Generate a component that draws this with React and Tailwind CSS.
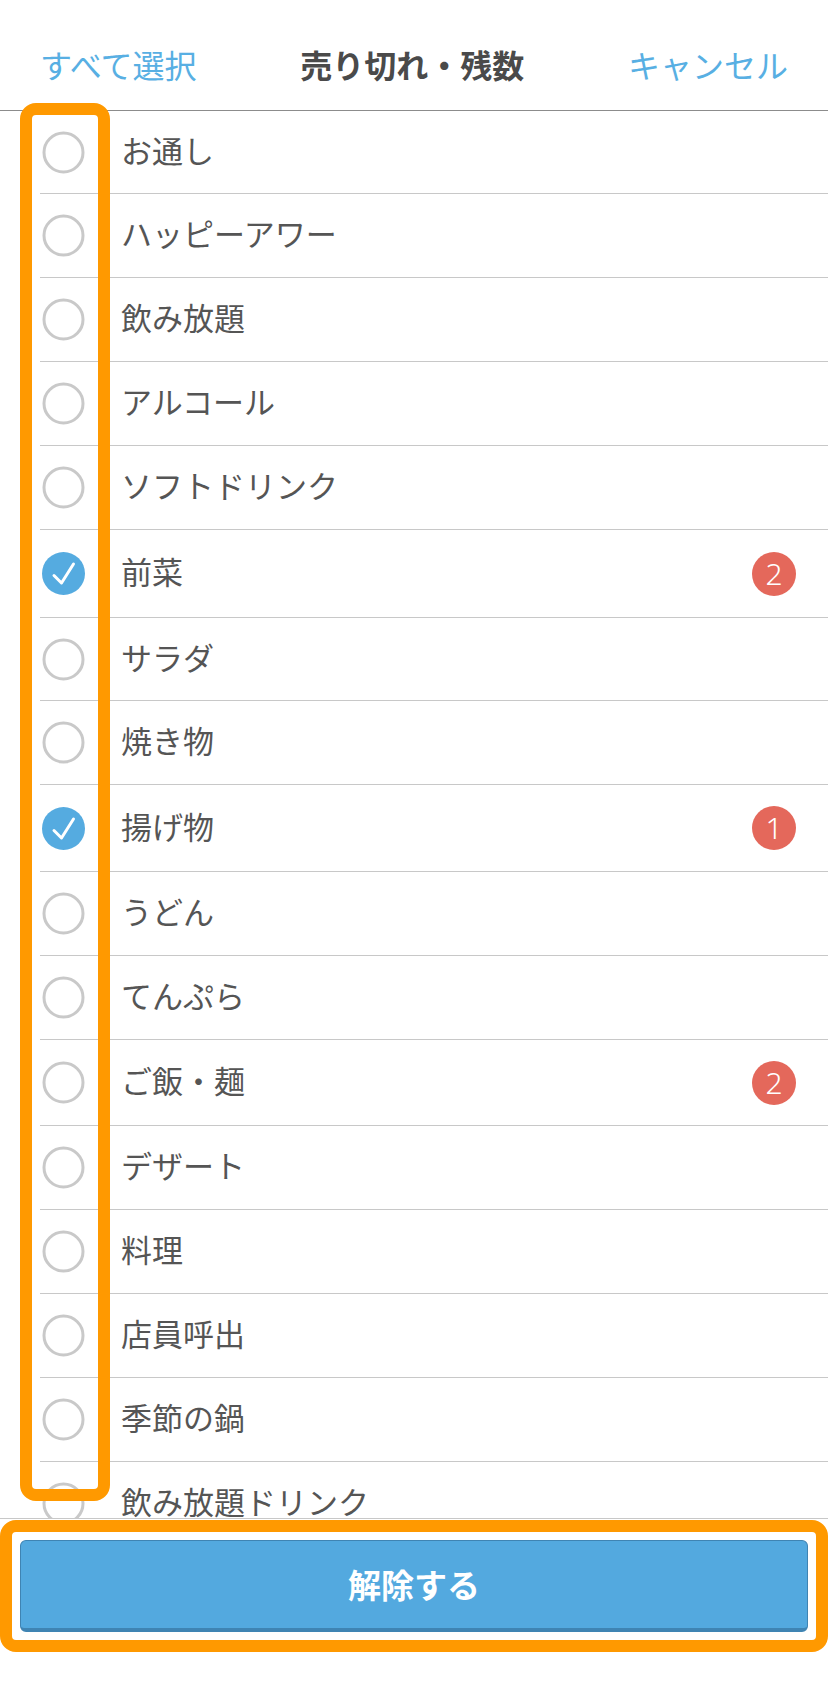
import React from 'react';

const items = [
  { name: 'お通し', h: 'h-[83px]' },
  { name: 'ハッピーアワー', h: 'h-[84px]' },
  { name: '飲み放題', h: 'h-[84px]' },
  { name: 'アルコール', h: 'h-[84px]' },
  { name: 'ソフトドリンク', h: 'h-[84px]' },
  { name: '前菜', h: 'h-[88px]', checked: true, count: 2 },
  { name: 'サラダ', h: 'h-[83px]' },
  { name: '焼き物', h: 'h-[84px]' },
  { name: '揚げ物', h: 'h-[87px]', checked: true, count: 1 },
  { name: 'うどん', h: 'h-[84px]' },
  { name: 'てんぷら', h: 'h-[84px]' },
  { name: 'ご飯・麺', h: 'h-[86px]', count: 2 },
  { name: 'デザート', h: 'h-[84px]' },
  { name: '料理', h: 'h-[84px]' },
  { name: '店員呼出', h: 'h-[84px]' },
  { name: '季節の鍋', h: 'h-[84px]' },
  { name: '飲み放題ドリンク', h: 'h-[84px]' },
];

const CheckCircle = ({ checked }) => {
  if (checked) {
    return (
      <svg width="43" height="43" viewBox="0 0 43 43" className="shrink-0">
        <circle cx="21.5" cy="21.5" r="21.5" fill="#55abe0" />
        <path
          d="M12 23.5 L19.5 31 L31.5 12"
          fill="none"
          stroke="#fff"
          strokeWidth="3"
          strokeLinecap="round"
          strokeLinejoin="round"
        />
      </svg>
    );
  }
  return (
    <svg width="43" height="43" viewBox="0 0 43 43" className="shrink-0">
      <circle cx="21.5" cy="21.5" r="19.5" fill="none" stroke="#c9c9c9" strokeWidth="3" />
    </svg>
  );
};

const Row = ({ item }) => (
  <div className={`${item.h} ml-[40px] flex items-center border-b border-[#c8c8c8] shrink-0`}>
    <div className="ml-[2px]">
      <CheckCircle checked={item.checked} />
    </div>
    <span className="ml-[36px] mb-[6px] text-[31px] text-[#555555] leading-none">{item.name}</span>
    {item.count && (
      <span className="ml-auto mr-[32px] w-[44px] h-[44px] rounded-full bg-[#e4685b] text-white flex items-center justify-center text-[30px] font-['Noto_Sans',sans-serif] font-light leading-none">
        {item.count}
      </span>
    )}
  </div>
);

export default function App() {
  return (
    <div className="relative w-[828px] h-[1685px] bg-white overflow-hidden font-['Noto_Sans_CJK_JP','Noto_Sans',sans-serif]">
      {/* header */}
      <div className="h-[111px] pt-[21px] px-[40px] flex items-start justify-between border-b border-[#8c8c8c]">
        <div className="h-[86px] flex items-center justify-between w-full">
          <span className="text-[32px] text-[#58afe3]">すべて選択</span>
          <span className="text-[32px] font-bold text-[#4a4a4a]">売り切れ・残数</span>
          <span className="text-[32px] text-[#58afe3]">キャンセル</span>
        </div>
      </div>

      {/* list */}
      <div className="h-[1408px] flex flex-col overflow-hidden border-b border-[#c8c8c8]">
        {items.map((item) => (
          <Row key={item.name} item={item} />
        ))}
      </div>

      {/* footer */}
      <div className="pt-[21px] px-[20px]">
        <button className="w-full h-[92px] rounded-[6px] bg-[#53a9df] border border-[#3f84b3] border-b-[4px] text-white text-[33px] font-bold">
          解除する
        </button>
      </div>

      {/* annotation highlights */}
      <div className="absolute left-[20px] top-[103px] w-[90px] h-[1398px] border-[12px] border-[#ff9900] rounded-[16px] pointer-events-none" />
      <div className="absolute left-0 top-[1520px] w-[828px] h-[132px] border-[12px] border-[#ff9900] rounded-[16px] pointer-events-none" />
    </div>
  );
}
